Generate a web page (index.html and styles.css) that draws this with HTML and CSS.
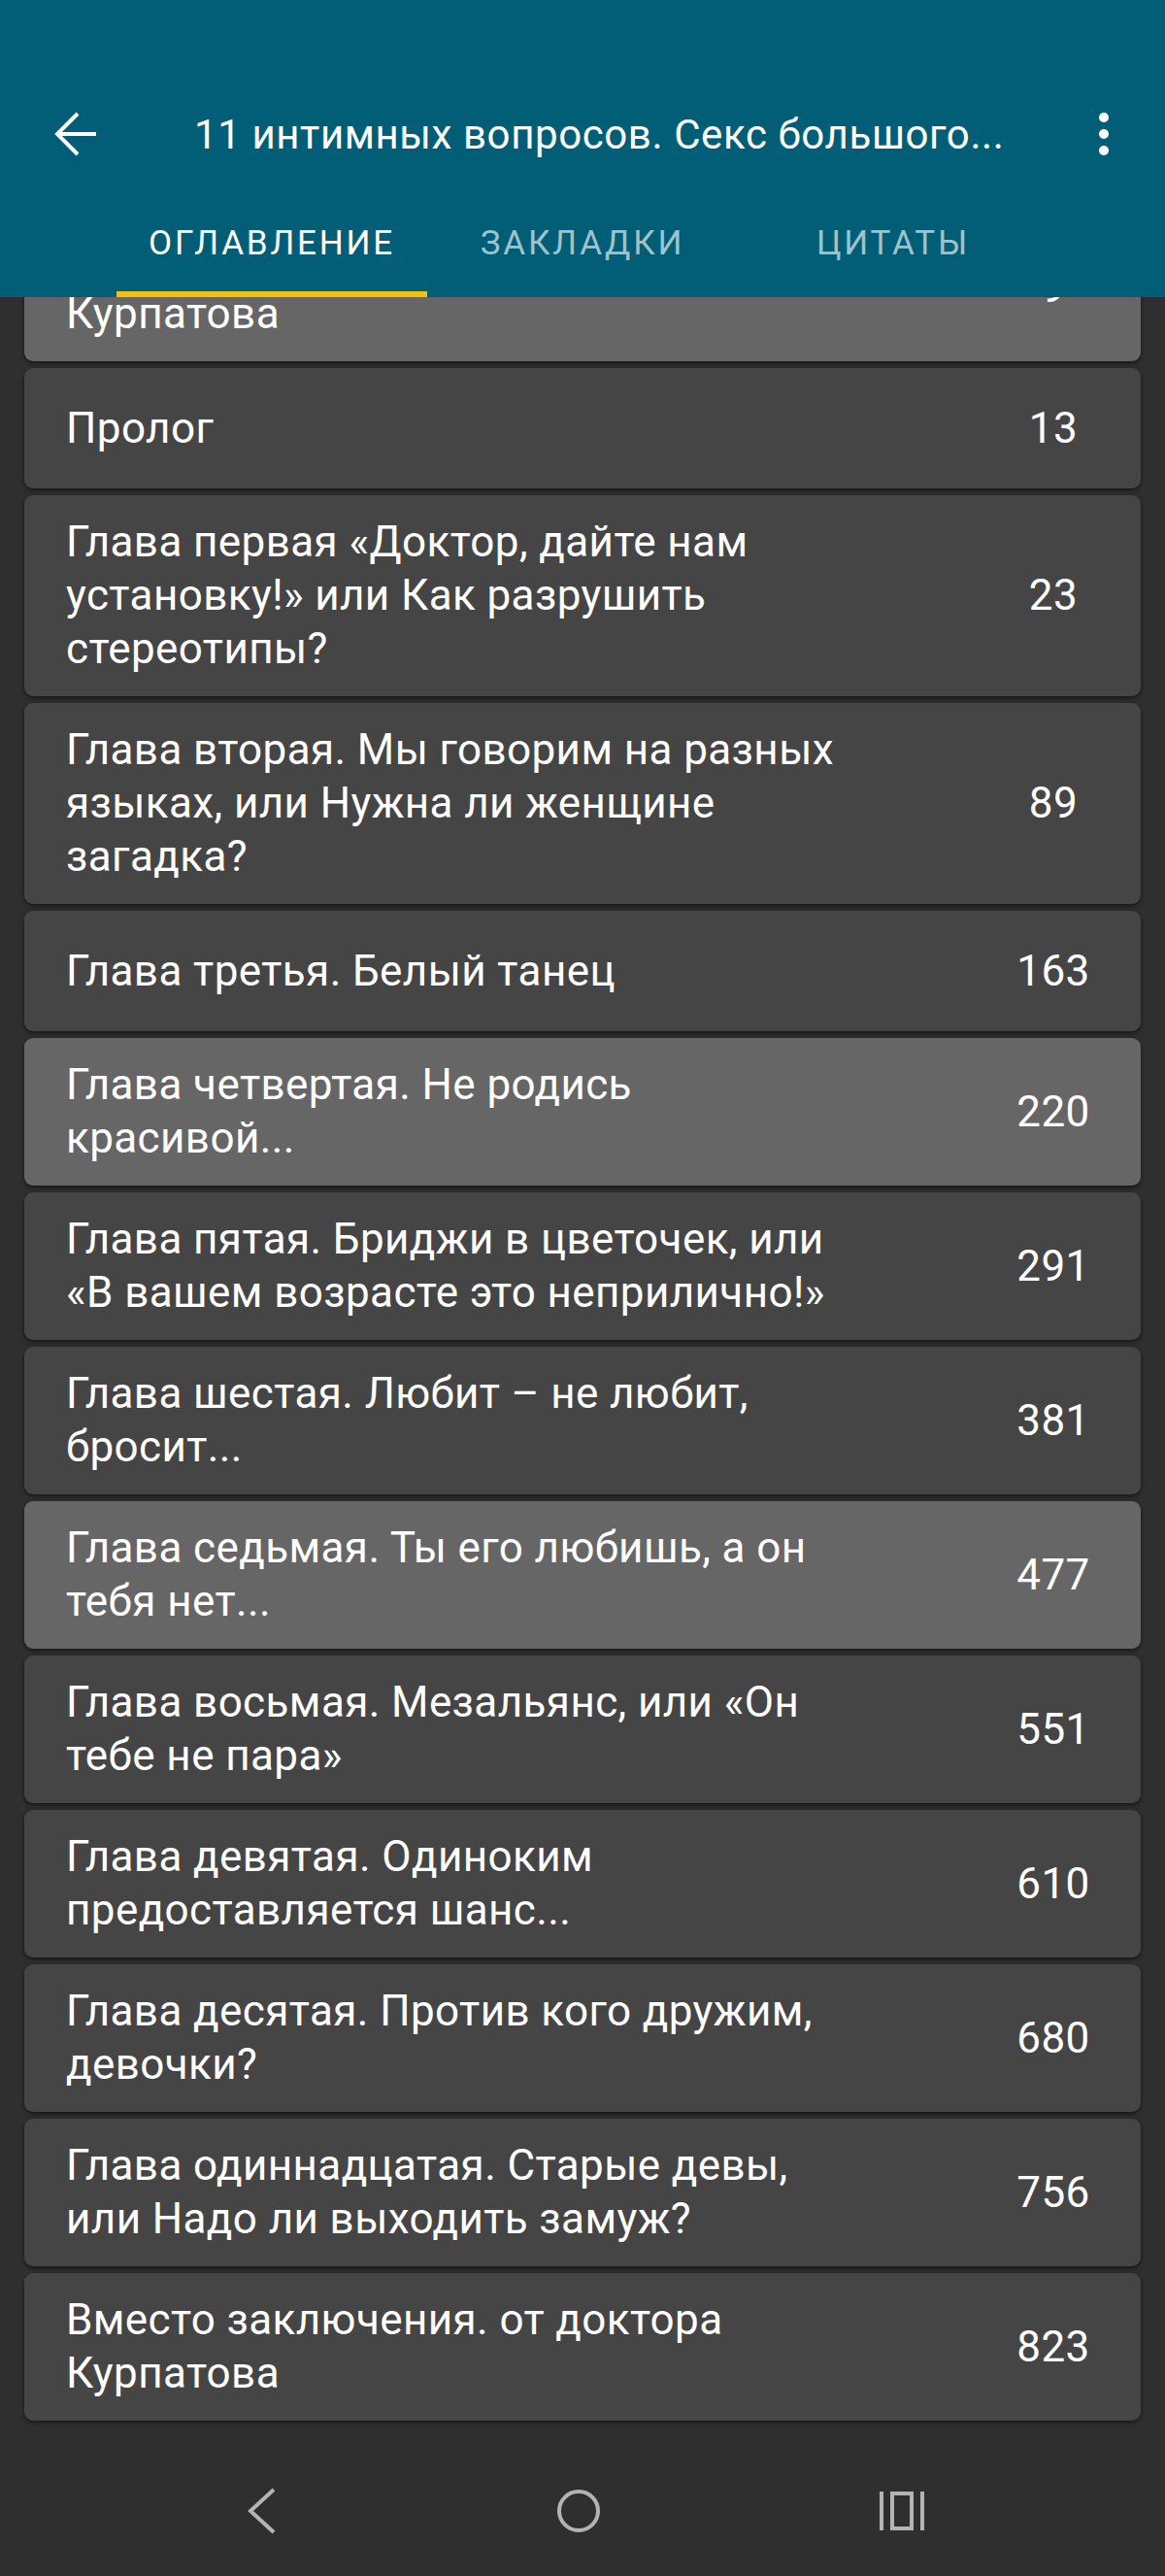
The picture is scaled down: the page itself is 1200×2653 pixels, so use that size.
FILE: index.html
```html
<!DOCTYPE html>
<html lang="ru">
<head>
	<meta charset="UTF-8">
	<title>Оглавление</title>
	<link rel="stylesheet" href="styles.css">
</head>
<body>
	<div class="app">
		<div class="topbar">
			<div class="toolbar">
				<svg class="back" width="46" height="46" viewBox="0 0 46 46">
					<path d="M44 23H4 M25 2L4 23L25 44" fill="none" stroke="#fff" stroke-width="4"/>
				</svg>
				<span class="bookTitle">11 интимных вопросов. Секс большого...</span>
				<svg class="more" width="12" height="46" viewBox="0 0 12 46">
					<circle cx="6" cy="6" r="5" fill="#fff"/>
					<circle cx="6" cy="23" r="5" fill="#fff"/>
					<circle cx="6" cy="40" r="5" fill="#fff"/>
				</svg>
			</div>
			<div class="tabs">
				<a class="tab active">ОГЛАВЛЕНИЕ</a>
				<a class="tab">ЗАКЛАДКИ</a>
				<a class="tab">ЦИТАТЫ</a>
			</div>
		</div>

		<div class="listWrap">
			<div class="list">
				<div class="item light">
					<span class="name">Вместо предисловия. от доктора Курпатова</span>
					<span class="page">9</span>
				</div>
				<div class="item">
					<span class="name">Пролог</span>
					<span class="page">13</span>
				</div>
				<div class="item">
					<span class="name">Глава первая «Доктор, дайте нам установку!» или Как разрушить стереотипы?</span>
					<span class="page">23</span>
				</div>
				<div class="item">
					<span class="name">Глава вторая. Мы говорим на разных языках, или Нужна ли женщине загадка?</span>
					<span class="page">89</span>
				</div>
				<div class="item">
					<span class="name">Глава третья. Белый танец</span>
					<span class="page">163</span>
				</div>
				<div class="item light">
					<span class="name">Глава четвертая. Не родись красивой...</span>
					<span class="page">220</span>
				</div>
				<div class="item">
					<span class="name">Глава пятая. Бриджи в цветочек, или «В вашем возрасте это неприлично!»</span>
					<span class="page">291</span>
				</div>
				<div class="item">
					<span class="name">Глава шестая. Любит – не любит, бросит...</span>
					<span class="page">381</span>
				</div>
				<div class="item light">
					<span class="name">Глава седьмая. Ты его любишь, а он тебя нет...</span>
					<span class="page">477</span>
				</div>
				<div class="item">
					<span class="name">Глава восьмая. Мезальянс, или «Он тебе не пара»</span>
					<span class="page">551</span>
				</div>
				<div class="item">
					<span class="name">Глава девятая. Одиноким предоставляется шанс...</span>
					<span class="page">610</span>
				</div>
				<div class="item">
					<span class="name">Глава десятая. Против кого дружим, девочки?</span>
					<span class="page">680</span>
				</div>
				<div class="item">
					<span class="name">Глава одиннадцатая. Старые девы, или Надо ли выходить замуж?</span>
					<span class="page">756</span>
				</div>
				<div class="item">
					<span class="name">Вместо заключения. от доктора Курпатова</span>
					<span class="page">823</span>
				</div>
			</div>
		</div>

		<div class="navbar">
			<svg width="32" height="48" viewBox="0 0 32 48">
				<path d="M28 2L4 24L28 46" fill="none" stroke="#b4b4b4" stroke-width="4"/>
			</svg>
			<svg width="48" height="48" viewBox="0 0 48 48">
				<circle cx="24" cy="24" r="20" fill="none" stroke="#b4b4b4" stroke-width="4"/>
			</svg>
			<svg width="46" height="42" viewBox="0 0 46 42">
				<rect x="0" y="1" width="4" height="40" fill="#b4b4b4"/>
				<rect x="13" y="3" width="20" height="36" fill="none" stroke="#b4b4b4" stroke-width="4"/>
				<rect x="42" y="1" width="4" height="40" fill="#b4b4b4"/>
			</svg>
		</div>
	</div>
</body>
</html>
```

FILE: styles.css
```css
*{
	box-sizing:border-box;
}
body{
	margin:0;
	background-color:#2f2f2f;
	font-family:Roboto, "Noto Sans", sans-serif;
	color:#fff;
}
.app{
	display:flex;
	flex-direction:column;
	min-height:100vh;
}
.topbar{
	background-color:#015e76;
	padding-top:80px;
	position:relative;
	z-index:1;
}
.toolbar{
	display:flex;
	align-items:center;
	height:116px;
	padding-left:55px;
	padding-right:57px;
}
.back{
	flex:none;
}
.bookTitle{
	flex:1;
	margin-left:99px;
	font-size:42px;
	letter-spacing:0.6px;
	white-space:nowrap;
	overflow:hidden;
}
.more{
	flex:none;
}
.tabs{
	display:flex;
	justify-content:center;
	height:110px;
}
.tab{
	width:320px;
	display:flex;
	align-items:center;
	justify-content:center;
	padding-top:4px;
	font-size:35px;
	letter-spacing:2.8px;
	color:#9ec3cd;
	border-bottom:6px solid transparent;
}
.tab.active{
	color:#fff;
	border-bottom-color:#f4c20d;
}
.listWrap{
	flex:1;
	overflow:hidden;
}
.list{
	display:flex;
	flex-direction:column;
	gap:7px;
	margin-top:-86px;
	padding:0 25px;
}
.item{
	display:grid;
	grid-template-columns:1fr 100px;
	column-gap:167px;
	align-items:center;
	min-height:124px;
	padding:21px 40px 21px 43px;
	background-color:#454545;
	border-radius:9px;
	box-shadow:0 2px 4px rgba(0,0,0,0.55);
	font-size:44px;
	letter-spacing:0.4px;
	line-height:55px;
}
.item.light{
	background-color:#666;
}
.page{
	text-align:center;
}
.navbar{
	height:134px;
	display:flex;
	align-items:center;
	justify-content:space-between;
	padding:0 248px 0 254px;
}
```
